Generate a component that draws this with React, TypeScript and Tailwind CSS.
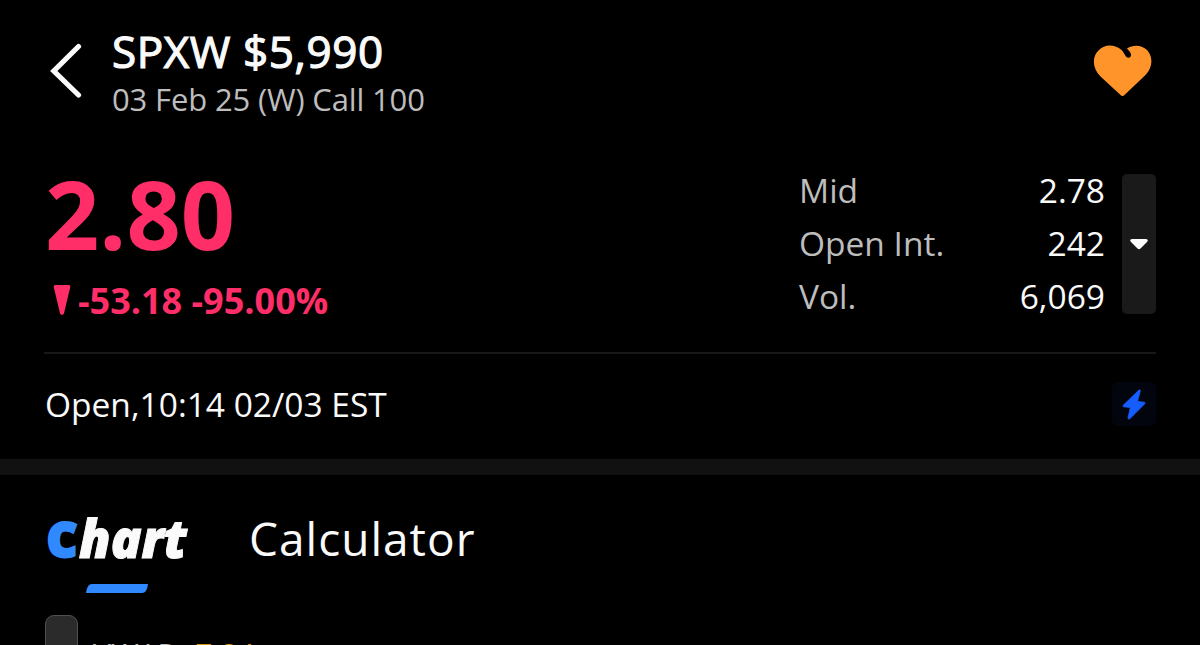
const labels = [
  { name: "Mid", value: "2.78" },
  { name: "Open Int.", value: "242" },
  { name: "Vol.", value: "6,069" },
];

function Header() {
  return (
    <header className="flex h-[126px] items-start pl-[50px] pr-[47px]">
      <svg className="mt-[42px] h-[58px] w-[32px] shrink-0" viewBox="0 0 32 58" fill="none">
        <path d="M28.500 4.500 3.800 29l24.700 24" stroke="#fafafa" strokeWidth="5.200" strokeLinecap="round" strokeLinejoin="miter" />
      </svg>
      <div className="ml-[30px] mt-[26px] grow whitespace-nowrap">
        <h1 className="text-[44px] leading-[50px] tracking-[0.6px] text-[#fafafa] [-webkit-text-stroke:1.2px_#fafafa]">SPXW $5,990</h1>
        <p className="mt-[4px] text-[31px] leading-[38px] tracking-[-0.15px] text-[#bdbdbd]">03 Feb 25 (W) Call 100</p>
      </div>
      <svg className="mt-[44px] h-[53px] w-[60px] shrink-0" viewBox="0 0 60 53">
        <path
          d="M29.500 52Q28.500 52 27 50.500L7.500 32.500C-1 24 -1 12.500 5.500 6.500C12-.5 22 .5 28.500 6C30.500 8 31.500 10.500 32.800 12.200C34 13.800 36 14.200 37.300 13C38.500 11.500 38 9.500 37 8L34 4.500C40 .5 49 .5 54.500 6.500C60 13 60 23 52.500 31L32 50.500Q30.500 52 29.500 52Z"
          fill="#ff942b"
        />
      </svg>
    </header>
  );
}

function Quote() {
  return (
    <section className="mx-[44px] flex h-[228px] border-b-2 border-[#181818]">
      <div className="grow whitespace-nowrap pt-[37px] text-[#ff2e68]">
        <p className="ml-[1px] text-[95px] font-bold leading-[100px]">2.80</p>
        <div className="flex h-[50px] items-center pt-[25px]">
          <svg className="-mt-[2px] ml-[9px] h-[32px] w-[18px]" viewBox="0 0 18 32">
            <path d="M2.500 1h13q2.200 0 1.700 2.200l-6.200 26q-2 3.500-4 0l-6.200-26Q.3 1 2.500 1Z" fill="currentColor" />
          </svg>
          <span className="ml-[7px] text-[36px] font-bold leading-[50px]">-53.18 -95.00%</span>
        </div>
      </div>
      <dl className="w-[306px] pt-[38px] text-[33.5px] leading-[53px]">
        {labels.map((row) => (
          <div key={row.name} className="flex justify-between">
            <dt className="text-[#bdbdbd]">{row.name}</dt>
            <dd className="text-[#fafafa]">{row.value}</dd>
          </div>
        ))}
      </dl>
      <button className="ml-[17px] mt-[48px] flex h-[140px] w-[34px] items-center justify-center rounded-[5px] bg-[#1a1a1a]">
        <svg className="h-[11px] w-[18px]" viewBox="0 0 18 11">
          <path d="M2 0h14q3 .5 1 3l-6.500 6.500q-1.500 1.500-3 0L1 3Q-1 .5 2 0Z" fill="#fff" />
        </svg>
      </button>
    </section>
  );
}

function Status() {
  return (
    <section className="flex h-[105px] items-start justify-between pl-[45px] pr-[44px] pt-[28px]">
      <span className="-mt-[3px] text-[33.5px] leading-[50px] text-[#fafafa]">Open,10:14 02/03 EST</span>
      <span className="flex h-[44px] w-[44px] items-center justify-center rounded-[6px] bg-[#02040e]">
        <svg className="h-[31px] w-[24px]" viewBox="0 0 24 31">
          <path d="M17 1 1 16.500q-.5 1 .8 1.300l6.500.7L6 29q.2 1.800 1.800.8L23 14.500q.5-1-.8-1.300l-6.700-.8L18.300 2Q18.200.2 17 1Z" fill="#165dff" stroke="#165dff" strokeWidth="0.800" />
        </svg>
      </span>
    </section>
  );
}

function Tabs() {
  return (
    <nav className="flex h-[140px] items-start pl-[45px]">
      <div className="w-[204px] pt-[35px]">
        <svg className="block h-[60px] w-[150px] overflow-visible font-extrabold" viewBox="0 0 150 60">
          <text x="2" y="47" fontSize="47" textLength="30" lengthAdjust="spacingAndGlyphs" fill="#3189ff" stroke="#3189ff" strokeWidth="3">C</text>
          <text className="italic" x="34" y="48" fontSize="53" textLength="108" lengthAdjust="spacingAndGlyphs" fill="#fafafa" stroke="#fafafa" strokeWidth="1">hart</text>
        </svg>
        <svg className="ml-[41px] mt-[14px] block h-[9px] w-[63px]" viewBox="0 0 63 9">
          <path d="M6 0h56q-1 9-6 9H0q1-9 6-9Z" fill="#3189ff" />
        </svg>
      </div>
      <span className="pt-[33px] text-[46px] leading-[60px] tracking-[1px] text-[#fafafa]">Calculator</span>
    </nav>
  );
}

export default function App() {
  return (
    <main className="flex h-[645px] w-[1200px] flex-col overflow-hidden bg-black font-[family-name:'Open_Sans','Noto_Sans',sans-serif]">
      <Header />
      <Quote />
      <Status />
      <div className="h-[16px] shrink-0 bg-[#111]" />
      <Tabs />
      <div className="flex h-[30px] shrink-0 pl-[45px]">
        <div className="h-[60px] w-[33px] rounded-[9px] border border-[#505050] bg-[#2b2b2b]" />
        <p className="ml-[15px] mt-[21px] whitespace-nowrap text-[30px] leading-[36px] text-[#bdbdbd]">
          VWAP: <span className="ml-[4px] text-[#d99a12]">7.84</span>
        </p>
      </div>
    </main>
  );
}
